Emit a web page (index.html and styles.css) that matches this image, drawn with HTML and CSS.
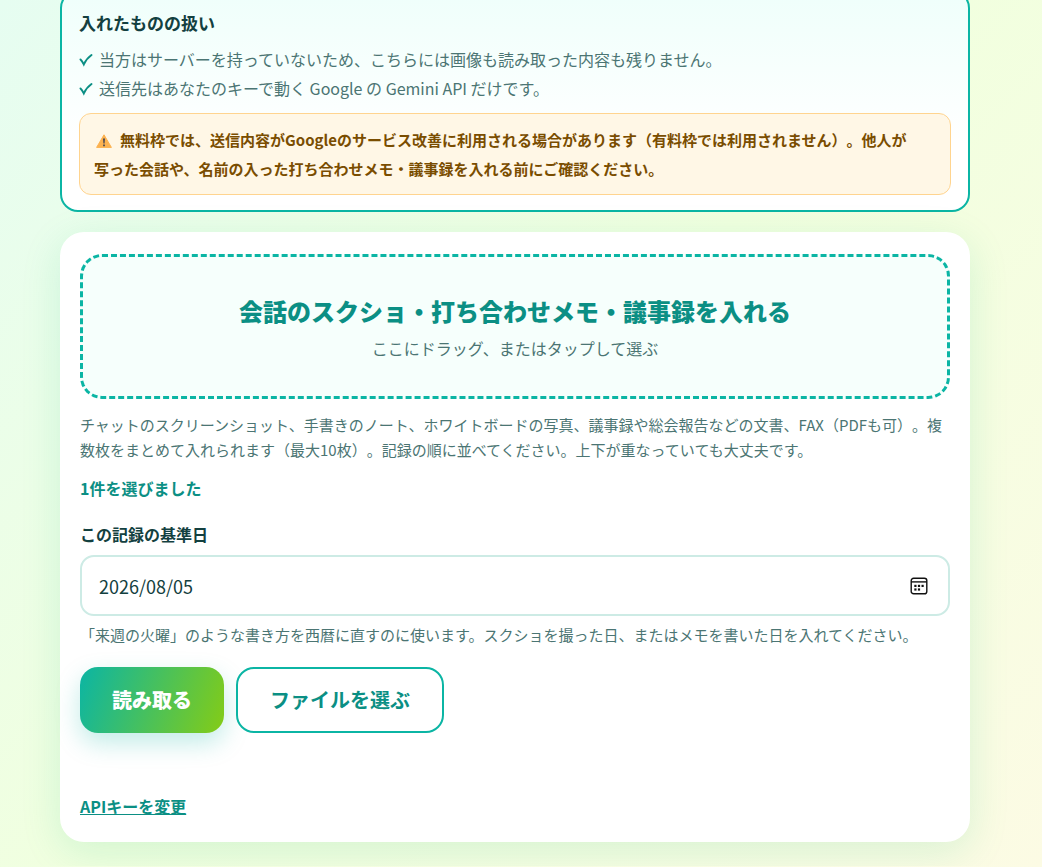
FILE: index.html
```
<!DOCTYPE html>
<html lang="ja">
<head>
<meta charset="UTF-8">
<meta name="viewport" content="width=device-width, initial-scale=1">
<title>会話のスクショ・打ち合わせメモ・議事録を入れる</title>
<link rel="stylesheet" href="styles.css">
</head>
<body>

<main class="wrap">
  <!-- データの扱い -->
  <section class="privacy">
    <h2>入れたものの扱い</h2>
    <ul class="checks">
      <li><svg class="check" viewBox="0 0 14 14" aria-hidden="true"><path d="M1.5 6.5C2.8 7.6 3.8 9.4 4.8 11.4 6.6 7.6 9 4.4 12.5 2"/></svg>当方はサーバーを持っていないため、こちらには画像も読み取った内容も残りません。</li>
      <li><svg class="check" viewBox="0 0 14 14" aria-hidden="true"><path d="M1.5 6.5C2.8 7.6 3.8 9.4 4.8 11.4 6.6 7.6 9 4.4 12.5 2"/></svg>送信先はあなたのキーで動く Google の Gemini API だけです。</li>
    </ul>
    <p class="alert"><svg class="warn" viewBox="0 0 16 14" aria-hidden="true"><path class="warn-body" d="M8 .8 15.4 13.4H.6Z"/><path class="warn-mark" d="M7 4.5h2L8.6 9.5H7.4ZM7.1 10.5h1.8v1.7H7.1Z"/></svg>無料枠では、送信内容がGoogleのサービス改善に利用される場合があります（有料枠では利用されません）。他人が<br>写った会話や、名前の入った打ち合わせメモ・議事録を入れる前にご確認ください。</p>
  </section>

  <!-- 読み取りフォーム -->
  <form class="card" onsubmit="return false">
    <button type="button" class="drop">
      <span class="drop-title">会話のスクショ・打ち合わせメモ・議事録を入れる</span>
      <span class="drop-sub">ここにドラッグ、またはタップして選ぶ</span>
    </button>
    <p class="hint">チャットのスクリーンショット、手書きのノート、ホワイトボードの写真、議事録や総会報告などの文書、FAX（PDFも可）。複数枚をまとめて入れられます（最大10枚）。記録の順に並べてください。上下が重なっていても大丈夫です。</p>
    <p class="picked">1件を選びました</p>

    <label class="label" for="baseDate">この記録の基準日</label>
    <div class="date">
      <input type="text" id="baseDate" value="2026/08/05" inputmode="numeric">
      <button type="button" class="date-btn" aria-label="カレンダーを開く">
        <svg viewBox="0 0 18 18" aria-hidden="true"><rect x="1.2" y="1.2" width="15.6" height="15.6" rx="2.4"/><path d="M1.2 4.9h15.6"/><g><rect x="4.3" y="7.8" width="2.2" height="2.2"/><rect x="7.9" y="7.8" width="2.2" height="2.2"/><rect x="11.5" y="7.8" width="2.2" height="2.2"/><rect x="4.3" y="11.4" width="2.2" height="2.2"/><rect x="7.9" y="11.4" width="2.2" height="2.2"/></g></svg>
      </button>
    </div>
    <p class="hint hint-date">「来週の火曜」のような書き方を西暦に直すのに使います。スクショを撮った日、またはメモを書いた日を入れてください。</p>

    <div class="actions">
      <button type="submit" class="btn btn-main">読み取る</button>
      <button type="button" class="btn btn-sub">ファイルを選ぶ</button>
    </div>

    <a class="key-link" href="#">APIキーを変更</a>
  </form>
</main>

</body>
</html>
```
FILE: styles.css
```
* {
  box-sizing: border-box;
}
body {
  margin: 0;
  padding: 0 72px 24px 60px;
  font-family: "Noto Sans CJK JP", sans-serif;
  font-size: 16px;
  line-height: 29px;
  color: #134040;
  background: linear-gradient(135deg, #e6fdf1 0%, #f1ffdf 50%, #fcfbe4 100%) fixed;
  text-spacing-trim: space-all;
}
h2, p, ul {
  margin: 0;
  padding: 0;
}
button, input {
  font: inherit;
  color: inherit;
}
button {
  cursor: pointer;
}
.wrap {
  max-width: 910px;
  margin: -10px auto 0;
}

/* データの扱い */
.privacy {
  padding: 16px 17px 15px;
  border: 2px solid #0bb5a4;
  border-radius: 18px;
  background: linear-gradient(180deg, #effffb, #fff 70%);
}
.privacy h2 {
  margin-bottom: 7px;
  font-size: 17px;
  line-height: 30px;
  font-weight: 700;
}
.checks {
  list-style: none;
  color: #4b7573;
}
.check {
  width: 14px;
  height: 14px;
  margin-right: 6px;
  vertical-align: -1px;
  fill: none;
  stroke: #0b8f84;
  stroke-width: 2;
  stroke-linecap: round;
}
.alert {
  margin-top: 10px;
  padding: 11px 14px;
  border: 1px solid #ffd48f;
  border-radius: 12px;
  background: #fff7e6;
  color: #7a4d00;
  font-size: 15px;
  font-weight: 700;
}
.warn {
  width: 16px;
  height: 14px;
  margin: 0 8px 0 2px;
  vertical-align: -2px;
}
.warn-body {
  fill: #fcb250;
  stroke: #fcb250;
  stroke-linejoin: round;
}
.warn-mark {
  fill: #4a4a55;
}

/* フォーム */
.card {
  margin-top: 20px;
  padding: 22px 20px 21px;
  border-radius: 24px;
  background: #fff;
  box-shadow: 0 10px 40px rgba(11, 181, 120, 0.14);
}
.drop {
  display: flex;
  flex-direction: column;
  align-items: center;
  gap: 4px;
  width: 100%;
  padding: 35px 20px 33px;
  border: 3px dashed #0bb5a4;
  border-radius: 22px;
  background: #f6fffc;
}
.drop-title {
  font-size: 24px;
  line-height: 38px;
  font-weight: 900;
  color: #0b8f84;
}
.drop-sub {
  color: #4b7573;
}
.hint {
  margin-top: 13px;
  font-size: 15px;
  line-height: 25px;
  color: #4b7573;
}
.picked {
  margin-top: 12px;
  font-weight: 700;
  color: #0b8f84;
}
.label {
  display: block;
  margin: 17px 0 6px;
  font-weight: 700;
}
.date {
  display: flex;
  align-items: center;
  padding-right: 20px;
  border: 2px solid #cdebe5;
  border-radius: 14px;
  background: #fff;
}
.date input {
  flex: 1;
  min-width: 0;
  padding: 15px 17px 13px;
  border: 0;
  outline: 0;
  background: none;
  font-size: 18px;
}
.date-btn {
  display: flex;
  padding: 0;
  border: 0;
  background: none;
}
.date-btn svg {
  width: 18px;
  height: 18px;
  fill: none;
  stroke: #111;
  stroke-width: 1.4;
}
.date-btn g {
  fill: #111;
  stroke: none;
}
.hint-date {
  margin-top: 6px;
}
.actions {
  display: flex;
  flex-wrap: wrap;
  gap: 12px;
  margin-top: 20px;
}
.btn {
  padding: 16px 32px;
  border: 0;
  border-radius: 18px;
  font-size: 20px;
  line-height: 34px;
  font-weight: 700;
}
.btn-main {
  background: linear-gradient(110deg, #0bb5a4, #84cc16);
  color: #fff;
  font-weight: 900;
  box-shadow: 0 10px 24px rgba(11, 181, 164, 0.25);
}
.btn-sub {
  padding: 14px 32px;
  border: 2px solid #0bb5a4;
  background: #fff;
  color: #0b8f84;
}
.key-link {
  display: inline-block;
  margin-top: 59px;
  font-weight: 700;
  color: #0b8f84;
}
```
